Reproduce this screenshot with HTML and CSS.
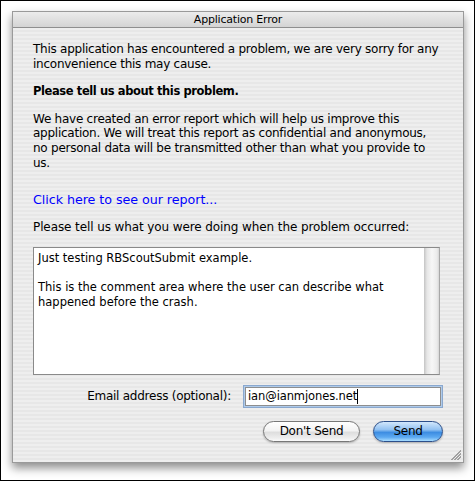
FILE: index.html
```html
<!DOCTYPE html>
<html>
<head>
<meta charset="utf-8">
<link rel="stylesheet" href="styles.css">
</head>
<body>
<div class="screen">
  <div class="window">
    <div class="titlebar">Application Error</div>
    <div class="content">
      <p class="para intro">This application has encountered a problem, we are very sorry for any<br>inconvenience this may cause.</p>
      <p class="para bold">Please tell us about this problem.</p>
      <p class="para details">We have created an error report which will help us improve this<br>application. We will treat this report as confidential and anonymous,<br>no personal data will be transmitted other than what you provide to<br>us.</p>
      <a class="link" href="#">Click here to see our report...</a>
      <p class="para prompt">Please tell us what you were doing when the problem occurred:</p>
      <div class="textarea">
        <div class="text">Just testing RBScoutSubmit example.<br><br>This is the comment area where the user can describe what<br>happened before the crash.</div>
        <div class="scrollbar"></div>
      </div>
      <div class="email-row">
        <span class="label">Email address (optional):</span>
        <div class="input">ian@ianmjones.net<span class="caret"></span></div>
      </div>
      <div class="buttons">
        <button class="btn cancel">Don't Send</button>
        <button class="btn default">Send</button>
      </div>
    </div>
    <div class="grip"></div>
  </div>
</div>
</body>
</html>
```

FILE: styles.css
```css
* { box-sizing: border-box; }
html, body { margin: 0; padding: 0; background: #fff; }
.screen {
  width: 475px;
  height: 481px;
  border: 1px solid #000;
  background: #fff;
  padding: 10px 0 0 11px;
}
.window {
  position: relative;
  width: 452px;
  height: 452px;
  border: 1px solid #9a9a9a;
  background: repeating-linear-gradient(to bottom, #eeeeee 0px, #eeeeee 2px, #e7e7e7 2px, #e7e7e7 4px);
  box-shadow: 0 5px 9px rgba(0,0,0,0.45);
  font-family: "DejaVu Sans", sans-serif;
  font-size: 12px;
  letter-spacing: -0.25px;
  color: #000;
  display: flex;
  flex-direction: column;
}
.titlebar {
  height: 16px;
  background: linear-gradient(to bottom, #ececec, #d4d4d4);
  border-bottom: 1px solid #8f8f8f;
  text-align: center;
  font-size: 11px;
  letter-spacing: -0.2px;
  line-height: 16px;
}
.content {
  padding: 14px 20px 0 20px;
  display: flex;
  flex-direction: column;
}
.para { margin: 0; line-height: 14.6px; white-space: nowrap; }
.bold { font-weight: bold; font-size: 11.5px; margin-top: 13px; letter-spacing: -0.4px; }
.details { margin-top: 13px; }
.link {
  margin-top: 22px;
  color: #0000ff;
  text-decoration: none;
  font-size: 12.7px;
  letter-spacing: -0.05px;
  line-height: 15px;
  align-self: flex-start;
}
.prompt { margin-top: 13px; letter-spacing: -0.1px; }
.textarea {
  margin-top: 12px;
  height: 128px;
  width: 407px;
  border: 1px solid #8a8a8a;
  border-right-color: #a8a8a8;
  background: #fff;
  display: flex;
}
.text {
  flex: 1;
  padding: 3px 4px;
  font-size: 11.5px;
  letter-spacing: 0;
  line-height: 14.6px;
}
.scrollbar {
  width: 15px;
  background: linear-gradient(to right, #c4c4c4 0px, #e6e6e6 3px, #f7f7f7 8px, #ebebeb 13px, #d6d6d6 15px);
}
.email-row {
  margin-top: 10px;
  display: flex;
  align-items: center;
  justify-content: flex-end;
  gap: 12px;
}
.label { line-height: 15px; }
.input {
  width: 200px;
  height: 23px;
  border: 1px solid #8aa8cf;
  box-shadow: inset 0 0 0 1px #b0cbea, inset 0 0 0 2px #8e8e8e;
  background: #fff;
  padding: 3px 4px;
  font-size: 11.5px;
  letter-spacing: -0.1px;
  line-height: 17px;
  display: flex;
  align-items: center;
}
.caret {
  display: inline-block;
  width: 1px;
  height: 15px;
  background: #000;
}
.buttons {
  margin-top: 13px;
  display: flex;
  justify-content: flex-end;
  gap: 13px;
}
.btn {
  height: 21px;
  border-radius: 11px;
  font-family: "DejaVu Sans", sans-serif;
  font-size: 12px;
  letter-spacing: -0.25px;
  color: #000;
  padding: 0;
  border: 1px solid #777;
  background: linear-gradient(to bottom, #ffffff 0%, #f3f3f3 45%, #dedede 55%, #eeeeee 85%, #fbfbfb 100%);
  box-shadow: 0 1px 2px rgba(0,0,0,0.25);
  line-height: 19px;
}
.btn.cancel { width: 97px; }
.btn.default {
  width: 70px;
  border-color: #2c4f8a;
  background: linear-gradient(to bottom, #d2e7fc 0%, #93c2f2 40%, #3d8de2 55%, #5ca9f1 80%, #a9ddff 100%);
}
.grip {
  position: absolute;
  right: 2px;
  bottom: 2px;
  width: 10px;
  height: 10px;
  background: linear-gradient(135deg, transparent 0 50%, #a0a0a0 50% 56%, transparent 56% 65%, #a0a0a0 65% 71%, transparent 71% 80%, #a0a0a0 80% 86%, transparent 86%);
}
```
